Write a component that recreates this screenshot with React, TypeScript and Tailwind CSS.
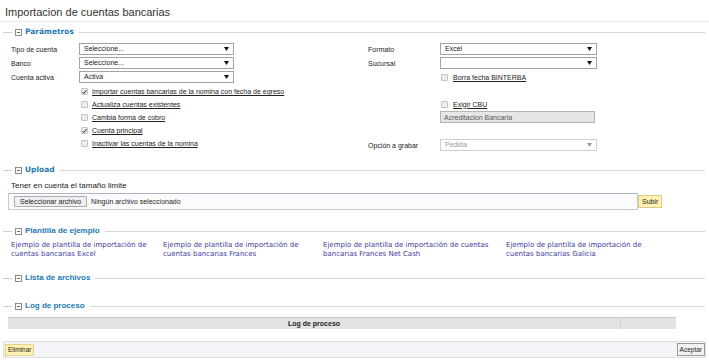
import React from "react";

const F = { fontFamily: '"Liberation Sans", Arial, sans-serif' };
const V = { fontFamily: '"DejaVu Sans", Verdana, sans-serif' };

function Legend({ text, big }: { text: string; big?: boolean }) {
  return (
    <div className="flex items-center h-[10px] pl-[3px] pr-[4px]">
      <div className="w-[9px] h-px bg-[#cfcfcf]" />
      <svg width="7" height="7" viewBox="0 0 7 7" className="ml-[3px] shrink-0">
        <rect x="0.5" y="0.5" width="6" height="6" fill="#fff" stroke="#8c8c8c" />
        <line x1="2" y1="3.5" x2="5" y2="3.5" stroke="#6a6a6a" />
      </svg>
      <span
        className={
          big
            ? "ml-[3px] text-[7.5px] font-bold text-[#2479b5] leading-[10px] whitespace-nowrap"
            : "ml-[3px] text-[8px] font-bold text-[#2479b5] leading-[10px] whitespace-nowrap"
        }
        style={big ? V : F}
      >
        {text}
      </span>
      <div className="flex-1 h-px bg-[#d6d6d6] ml-[5px]" />
    </div>
  );
}

function Select({ value, w, disabled }: { value: string; w: string; disabled?: boolean }) {
  return (
    <div
      className={
        "h-[12px] border bg-white flex items-center justify-between pl-[4px] pr-[4px] text-[7px] leading-[10px] " +
        w +
        (disabled ? " border-[#cfcfcf] text-[#9a9a9a]" : " border-[#a3a3a3] text-[#222]")
      }
    >
      <span>{value}</span>
      <svg width="5" height="4" viewBox="0 0 5 4">
        <polygon points="0,0 5,0 2.5,4" fill={disabled ? "#9a9a9a" : "#111"} />
      </svg>
    </div>
  );
}

function Check({ checked }: { checked?: boolean }) {
  return (
    <span className="w-[7px] h-[7px] border border-[#c4c4c4] bg-[#ededed] rounded-[1px] flex items-center justify-center shrink-0">
      {checked && (
        <svg width="6" height="6" viewBox="0 0 6 6">
          <path d="M0.8 3.2 L2.3 4.8 L5.3 0.9" fill="none" stroke="#222" strokeWidth="1.2" />
        </svg>
      )}
    </span>
  );
}

function CheckRow({ label, checked, h = "h-[13px]", gap = "ml-[4px]" }: { label: string; checked?: boolean; h?: string; gap?: string }) {
  return (
    <div className={"flex items-center " + h}>
      <Check checked={checked} />
      <span className={gap + " text-[7px] text-[#222] underline leading-[9px] whitespace-nowrap"}>{label}</span>
    </div>
  );
}

function Row({ label, lw, children }: { label: string; lw: string; children: React.ReactNode }) {
  return (
    <div className="flex items-center h-[12px]">
      <span className={lw + " text-[7px] text-[#222] leading-[9px]"}>{label}</span>
      {children}
    </div>
  );
}

export default function App() {
  return (
    <div className="w-[709px] h-[362px] bg-white overflow-hidden text-[#222]" style={F}>
      <div className="h-[22px] border-b border-[#ececec] pl-[5px] pt-[6px] text-[11px] leading-[12px] text-[#333]">
        Importacion de cuentas bancarias
      </div>

      <div className="mt-[5px]">
        <Legend text="Parámetros" big />
      </div>

      <div className="mt-[6px] flex">
        <div className="pl-[11px] w-[368px]">
          <Row label="Tipo de cuenta" lw="w-[68px]">
            <Select value="Seleccione..." w="w-[155px]" />
          </Row>
          <div className="mt-[2px]">
            <Row label="Banco" lw="w-[68px]">
              <Select value="Seleccione..." w="w-[155px]" />
            </Row>
          </div>
          <div className="mt-[2px]">
            <Row label="Cuenta activa" lw="w-[68px]">
              <Select value="Activa" w="w-[155px]" />
            </Row>
          </div>
          <div className="mt-[2px] pl-[70px]">
            <CheckRow label="Importar cuentas bancarias de la nomina con fecha de egreso" checked />
            <CheckRow label="Actualiza cuentas existentes" />
            <CheckRow label="Cambia forma de cobro" />
            <CheckRow label="Cuenta principal" checked />
            <CheckRow label="Inactivar las cuentas de la nomina" />
          </div>
        </div>

        <div className="flex-1">
          <Row label="Formato" lw="w-[72px]">
            <Select value="Excel" w="w-[157px]" />
          </Row>
          <div className="mt-[2px]">
            <Row label="Sucursal" lw="w-[72px]">
              <Select value="" w="w-[157px]" />
            </Row>
          </div>
          <div className="mt-[2px] pl-[73px]">
            <CheckRow label="Borra fecha BINTERBA" h="h-[12px]" gap="ml-[5px]" />
          </div>
          <div className="mt-[15px] pl-[73px]">
            <CheckRow label="Exigir CBU" h="h-[12px]" gap="ml-[5px]" />
          </div>
          <div className="mt-[1px] pl-[72px]">
            <div className="w-[155px] h-[12px] border border-[#b4b4b4] bg-[#e6e6e6] flex items-center pl-[3px] text-[7px] text-[#555] leading-[9px]">
              Acreditacion Bancaria
            </div>
          </div>
          <div className="mt-[16px]">
            <Row label="Opción a grabar" lw="w-[72px]">
              <Select value="Pedida" w="w-[157px]" disabled />
            </Row>
          </div>
        </div>
      </div>

      <div className="mt-[14px]">
        <Legend text="Upload" big />
      </div>

      <div className="mt-[6px] h-[10px] pl-[11px] text-[8px] leading-[10px] text-[#222]">
        Tener en cuenta el tamaño limite
      </div>

      <div className="mt-[2px] flex items-center pl-[8px]">
        <div className="w-[630px] h-[17px] border border-[#c3cad6] border-t-[#a9b6cc] bg-[#fbfbfb] flex items-center pl-[5px]">
          <div className="h-[11px] px-[5px] border border-[#acacac] bg-[#efefef] rounded-[1px] flex items-center text-[7px] leading-[9px] text-[#222]">
            Seleccionar archivo
          </div>
          <span className="ml-[4px] text-[7px] leading-[9px] text-[#222]">Ningún archivo seleccionado</span>
        </div>
        <div className="h-[13px] px-[3px] border border-[#d9c98c] bg-[#fff2b2] flex items-center text-[7px] leading-[9px] text-[#222]">
          Subir
        </div>
      </div>

      <div className="mt-[16px]">
        <Legend text="Plantilla de ejemplo" />
      </div>

      <div className="mt-[5px] flex pl-[11px] text-[7px] leading-[9px] text-[#3b3b9c]" style={V}>
        <div className="w-[152px]">
          Ejemplo de plantilla de importación de
          <br />
          cuentas bancarias Excel
        </div>
        <div className="w-[160px]">
          Ejemplo de plantilla de importación de
          <br />
          cuentas bancarias Frances
        </div>
        <div className="w-[183px]">
          Ejemplo de plantilla de importación de cuentas
          <br />
          bancarias Frances Net Cash
        </div>
        <div>
          Ejemplo de plantilla de importación de
          <br />
          cuentas bancarias Galicia
        </div>
      </div>

      <div className="mt-[14px]">
        <Legend text="Lista de archivos" />
      </div>

      <div className="mt-[18px]">
        <Legend text="Log de proceso" />
      </div>

      <div className="mt-[6px] ml-[8px] w-[668px] h-[12px] bg-[#e3e3e3] border-t border-[#c9c9c9] flex">
        <div className="w-[612px] flex items-center justify-center text-[7px] font-bold leading-[9px] text-[#222]">
          Log de proceso
        </div>
        <div className="w-px bg-[#cfcfcf]" />
        <div className="flex-1" />
      </div>

      <div className="mt-[12px] mx-[3px] h-[17px] bg-[#f3f4f7] border border-[#dedede] flex items-center justify-between pl-[1px] pr-[0px]">
        <div className="h-[12px] px-[2px] border border-[#e3d38f] bg-[#fff2b2] flex items-center text-[6.5px] leading-[9px] text-[#222]">
          Eliminar
        </div>
        <div className="h-[13px] px-[2px] border border-[#9a9a9a] bg-[#f2f2f2] flex items-center text-[6.5px] leading-[9px] text-[#222]">
          Aceptar
        </div>
      </div>
    </div>
  );
}
